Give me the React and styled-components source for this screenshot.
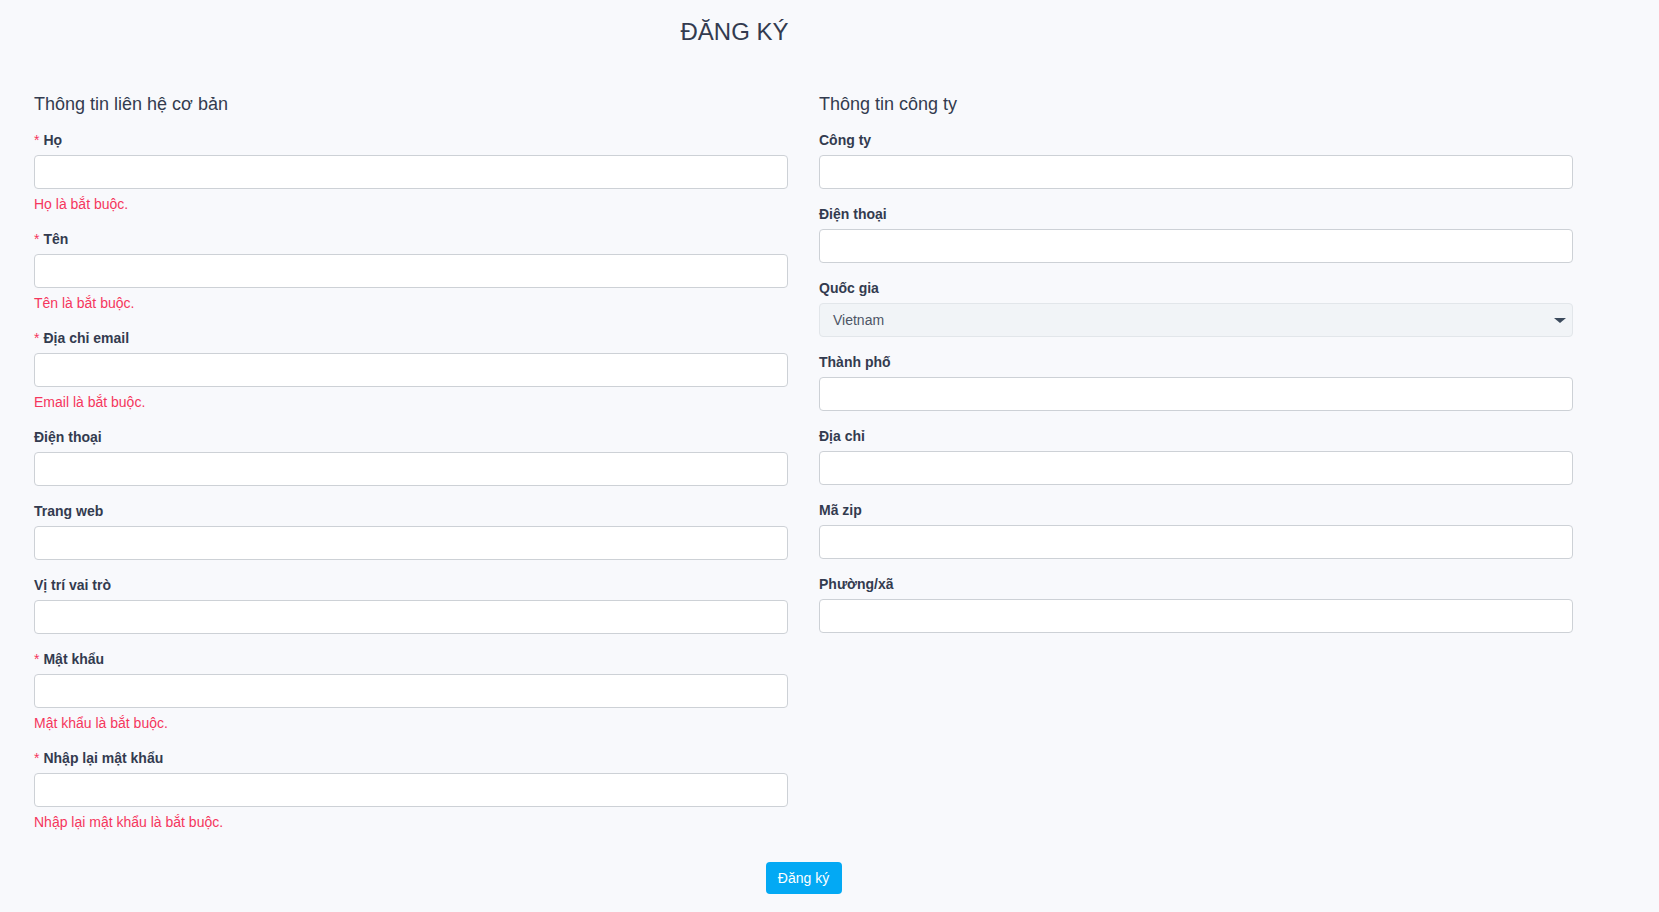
import React from 'react'
import styled, { createGlobalStyle } from 'styled-components'

const GlobalStyle = createGlobalStyle`
  * { box-sizing: border-box; }
  body {
    margin: 0;
    background: #f8f9fc;
    font-family: "Liberation Sans", Arial, sans-serif;
    color: #32325d;
  }
`

const leftFields = [
  { label: 'Họ', required: true, error: 'Họ là bắt buộc.' },
  { label: 'Tên', required: true, error: 'Tên là bắt buộc.' },
  { label: 'Địa chỉ email', required: true, error: 'Email là bắt buộc.' },
  { label: 'Điện thoại' },
  { label: 'Trang web' },
  { label: 'Vị trí vai trò' },
  { label: 'Mật khẩu', required: true, error: 'Mật khẩu là bắt buộc.', type: 'password' },
  { label: 'Nhập lại mật khẩu', required: true, error: 'Nhập lại mật khẩu là bắt buộc.', type: 'password' },
]

const rightFields = [
  { label: 'Công ty' },
  { label: 'Điện thoại' },
  { label: 'Quốc gia', select: true },
  { label: 'Thành phố' },
  { label: 'Địa chỉ' },
  { label: 'Mã zip' },
  { label: 'Phường/xã' },
]

const Page = styled.div`
  width: 1539px;
  margin-left: 34px;
  padding-top: 18px;
  padding-bottom: 18px;
`

const Title = styled.h1`
  margin: 0;
  padding-right: 138px;
  text-align: center;
  font-size: 24px;
  line-height: 28px;
  font-weight: 400;
  color: #333b4f;
`

const Columns = styled.div`
  display: grid;
  grid-template-columns: 1fr 1fr;
  column-gap: 31px;
  margin-top: 47px;
`

const Section = styled.h2`
  margin: 0 0 15px;
  font-size: 18px;
  line-height: 22px;
  font-weight: 400;
  color: #333b4f;
`

const Group = styled.div`
  margin-bottom: 15px;
`

const Label = styled.label`
  display: block;
  margin-bottom: 5px;
  font-size: 14px;
  line-height: 20px;
  font-weight: 700;
  color: #333b4f;
`

const Star = styled.span`
  color: #f5365c;
  font-weight: 400;
  margin-right: 4px;
`

const Input = styled.input`
  display: block;
  width: 100%;
  height: 34px;
  padding: 0 12px;
  background: #fff;
  border: 1px solid #cdd1d6;
  border-radius: 4px;
  font: inherit;
  font-size: 14px;
  outline: none;
`

const SelectBox = styled.div`
  position: relative;
  display: flex;
  align-items: center;
  height: 34px;
  padding: 0 13px;
  background: #f1f4f7;
  border: 1px solid #e2e6ea;
  border-radius: 4px;
  font-size: 14px;
  color: #4d5566;
`

const Caret = styled.span`
  position: absolute;
  right: 6px;
  top: 14px;
  width: 0;
  height: 0;
  border-left: 6px solid transparent;
  border-right: 6px solid transparent;
  border-top: 5px solid #3b4a5c;
`

const Error = styled.div`
  margin-top: 5px;
  font-size: 14px;
  line-height: 20px;
  color: #f5365c;
`

const Actions = styled.div`
  display: flex;
  justify-content: center;
  margin-top: 15px;
`

const Button = styled.button`
  width: 76px;
  height: 32px;
  background: #03a9f4;
  color: #fff;
  border: none;
  border-radius: 4px;
  font-family: inherit;
  font-size: 14px;
  cursor: pointer;
`

const Field = ({ label, required, error, select, type }) => (
  <Group>
    <Label>
      {required && <Star>*</Star>}
      {label}
    </Label>
    {select ? (
      <SelectBox>
        Vietnam
        <Caret />
      </SelectBox>
    ) : (
      <Input type={type || 'text'} />
    )}
    {error && <Error>{error}</Error>}
  </Group>
)

const App = () => {
  return (
    <>
      <GlobalStyle />
      <Page>
        <Title>ĐĂNG KÝ</Title>
        <Columns>
          <div>
            <Section>Thông tin liên hệ cơ bản</Section>
            {leftFields.map((f) => (
              <Field key={f.label} {...f} />
            ))}
          </div>
          <div>
            <Section>Thông tin công ty</Section>
            {rightFields.map((f) => (
              <Field key={f.label} {...f} />
            ))}
          </div>
        </Columns>
        <Actions>
          <Button>Đăng ký</Button>
        </Actions>
      </Page>
    </>
  )
}

export default App
